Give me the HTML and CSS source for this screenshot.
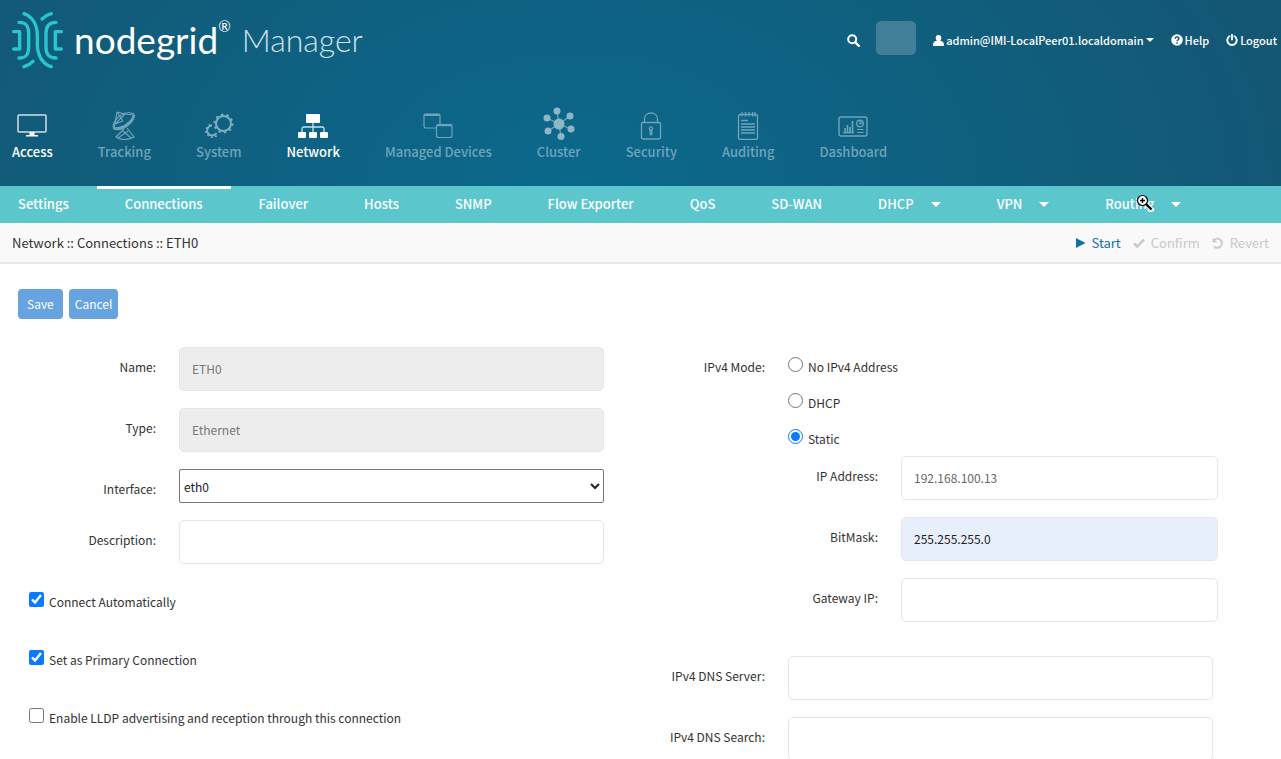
FILE: index.html
```html
<!DOCTYPE html>
<html lang="en">
<head>
<meta charset="utf-8">
<title>nodegrid Manager - Network Connections</title>
<link rel="stylesheet" href="styles.css">
</head>
<body>
<header class="header">
  <div class="topbar">
    <div class="brand">
      <svg class="brand-mark" viewBox="36 30 156 180" aria-hidden="true">
        <g fill="none" stroke="#27c7d2" stroke-width="10" stroke-linecap="round" stroke-linejoin="round">
          <path d="M41 95H59V147H41"/>
          <path d="M57 67C80 67 86 80 86 100V142C86 162 80 174 57 174"/>
          <path d="M72 41C98 50 112 76 112 108V132C112 164 126 192 154 200"/>
          <path d="M126 57Q138 45 154 41"/>
          <path d="M72 200Q88 195 99 184"/>
          <path d="M168 67C145 67 138 80 138 100V142C138 162 145 174 168 174"/>
          <path d="M184 95H166V147H184"/>
        </g>
      </svg>
      <span class="brand-name">nodegrid<sup class="brand-reg">®</sup></span>
      <span class="brand-product">Manager</span>
    </div>
    <div class="user-tools">
      <button class="tool" type="button" aria-label="Search">
        <svg width="13" height="13" viewBox="0 0 13 13" aria-hidden="true"><circle cx="5.2" cy="5.2" r="4" fill="none" stroke="#fff" stroke-width="2"/><path d="M8.3 8.3L11.8 11.8" stroke="#fff" stroke-width="2.4" stroke-linecap="round"/></svg>
      </button>
      <span class="tile"></span>
      <button class="tool tool-user" type="button">
        <svg width="11" height="11" viewBox="0 0 11 11" aria-hidden="true"><path fill="#fff" d="M5.500 0a2.800 3 0 0 1 2.800 3c0 1.200-.5 2.200-1.200 2.700C9.800 6 11 7.400 11 10c0 .6-.4 1-1 1H1c-.6 0-1-.4-1-1 0-2.600 1.200-4 3.900-4.300C3.200 5.200 2.700 4.200 2.700 3a2.800 3 0 0 1 2.800-3z"/></svg>
        <span>admin@IMI-LocalPeer01.localdomain</span><span class="caret"></span>
      </button>
      <a class="tool tool-help" href="#help">
        <svg width="12" height="12" viewBox="0 0 12 12" aria-hidden="true"><circle cx="6" cy="6" r="5.800" fill="#fff"/><path d="M4.200 4.700C4.200 2.300 7.900 2.400 7.900 4.500 7.900 5.700 6.100 5.800 6.100 7.200M6.100 8.300V9.700" fill="none" stroke="#115d7d" stroke-width="1.500"/></svg>
        Help</a>
      <a class="tool" href="#logout">
        <svg width="12" height="12" viewBox="0 0 12 12" aria-hidden="true"><path d="M3.500 2.300A4.700 4.700 0 1 0 8.500 2.300M6 .8V5.500" fill="none" stroke="#fff" stroke-width="1.900" stroke-linecap="round"/></svg>
        Logout</a>
    </div>
  </div>

  <nav class="main-nav" aria-label="Main">
    <a class="main-item main-item-on" href="#access">
      <svg width="30" height="30" viewBox="0 0 30 30" aria-hidden="true"><rect x="1" y="5" width="28" height="17" rx="1" fill="none" stroke="#d0e0e7" stroke-width="1.500"/><path d="M12.500 22h5v3h3.500v1.500H9V25h3.500z" fill="#fff"/></svg>
      Access</a>
    <a class="main-item" href="#tracking">
      <svg width="30" height="30" viewBox="0 0 30 30" aria-hidden="true"><g fill="none" stroke="currentColor" stroke-width="1.200"><path d="M25 4C26 11 15 22 5 19 1 12 14 -1 25 4z"/><path d="M25 5C24 12 14 19 5 18.500" stroke-width="2.600"/><path d="M8 2L16 4 24 5M8 2L5 18M8 2L14 11M14 11L6 14M16 4L6 14M15 19L7 27Q15 32 25 27L18 18M14 21L22 28M19 21L9 28"/></g></svg>
      Tracking</a>
    <a class="main-item" href="#system">
      <svg width="30" height="30" viewBox="0 0 30 30" aria-hidden="true"><g fill="none" stroke="#7fafc2"><circle cx="19.500" cy="13.500" r="7.500" stroke-width="2"/><circle cx="19.500" cy="13.500" r="9" stroke-width="2" stroke-dasharray="2.400 3.255"/><path d="M8 15.500A5 5 0 1 0 12.500 23" stroke-width="1.800"/><path d="M6.500 14.500A6.500 6.500 0 1 0 14 24" stroke-width="1.600" stroke-dasharray="2 2.200"/></g></svg>
      System</a>
    <a class="main-item main-item-on" href="#network">
      <svg width="30" height="30" viewBox="0 0 30 30" aria-hidden="true"><g fill="#fff"><rect x="8" y="4" width="14" height="9" rx="1"/><rect x="0" y="22" width="8" height="6" rx="1"/><rect x="11" y="22" width="8" height="6" rx="1"/><rect x="22" y="22" width="8" height="6" rx="1"/></g><path d="M15 13V22M4 22V18.500Q4 17 6 17H24Q26 17 26 18.500V22" fill="none" stroke="#d0e0e7" stroke-width="1.300"/></svg>
      Network</a>
    <a class="main-item" href="#devices">
      <svg width="30" height="30" viewBox="0 0 30 30" aria-hidden="true"><g fill="none" stroke="currentColor" stroke-width="1.200"><path d="M13 18H3Q1 18 1 16V6Q1 4 3 4H15Q17 4 17 6V14"/><rect x="13.500" y="14.500" width="15.500" height="13" rx="2"/><path d="M1 5H17M14 15.300H29" stroke-width="2"/></g></svg>
      Managed Devices</a>
    <a class="main-item" href="#cluster">
      <svg width="34" height="34" viewBox="0 0 34 34" aria-hidden="true"><path d="M17 18L15 5M17 18L28 10M17 18L29 23M17 18L19 31M17 18L6 25M17 18L5 12" stroke="currentColor" stroke-width="1.300"/><g class="solid"><circle cx="17" cy="18" r="5.500"/><circle cx="15" cy="5" r="3.500"/><circle cx="28" cy="10" r="3.500"/><circle cx="29" cy="23" r="3.500"/><circle cx="19" cy="30.500" r="3.500"/><circle cx="6" cy="25" r="3.500"/><circle cx="5" cy="12" r="3.500"/></g></svg>
      Cluster</a>
    <a class="main-item" href="#security">
      <svg width="30" height="30" viewBox="0 0 30 30" aria-hidden="true"><g fill="none" stroke="currentColor" stroke-width="1.300"><rect x="5.500" y="12.500" width="19" height="16.500" rx="1.500"/><path d="M8.500 12.500V9C8.500 1 21.500 1 21.500 9V12.500"/><circle cx="15" cy="18.500" r="1.700"/><path d="M14.300 20V24.500H15.700V20"/></g></svg>
      Security</a>
    <a class="main-item" href="#auditing">
      <svg width="30" height="30" viewBox="0 0 30 30" aria-hidden="true"><g fill="none" stroke="currentColor" stroke-width="1.300"><rect x="5.500" y="4.500" width="19" height="25" rx="2"/><path d="M9 2V6.500M12.500 2V6.500M16 2V6.500M19.500 2V6.500M22 2V6.500M8 10.500H15M8 14H22M8 17H22M8 20H22M8 23H22"/></g></svg>
      Auditing</a>
    <a class="main-item" href="#dashboard">
      <svg width="30" height="30" viewBox="0 0 30 30" aria-hidden="true"><g fill="none" stroke="currentColor"><rect x="1" y="7" width="28" height="19" rx="2" stroke-width="1.400"/><path d="M7 22V18M9.500 22V15M12 22V17M14.500 22V11" stroke-width="1.600"/><path d="M5 22.700H16M19 19.500H25.500M19 22.500H25.500" stroke-width="1.200"/><circle cx="22" cy="13.500" r="3.300" stroke-width="1.300"/><path d="M22 10V14L25 12" stroke-width="1.200"/></g></svg>
      Dashboard</a>
  </nav>
</header>

<nav class="sub-nav" aria-label="Network">
  <a class="sub-item" href="#settings">Settings</a>
  <a class="sub-item sub-item-on" href="#connections">Connections</a>
  <a class="sub-item" href="#failover">Failover</a>
  <a class="sub-item" href="#hosts">Hosts</a>
  <a class="sub-item" href="#snmp">SNMP</a>
  <a class="sub-item" href="#flow">Flow Exporter</a>
  <a class="sub-item" href="#qos">QoS</a>
  <a class="sub-item" href="#sdwan">SD-WAN</a>
  <a class="sub-item" href="#dhcp">DHCP<span class="caret"></span></a>
  <a class="sub-item" href="#vpn">VPN<span class="caret"></span></a>
  <a class="sub-item" href="#routing">Routing<span class="caret"></span>
    <svg class="pointer" width="18" height="18" viewBox="0 0 18 18" aria-hidden="true"><path d="M9.500 9.500L16 16" stroke="#fff" stroke-width="4"/><path d="M9.500 9.500L15.500 15.500" stroke="#000" stroke-width="2.400"/><circle cx="6.500" cy="6.500" r="5" fill="#fff" stroke="#000" stroke-width="1.200"/><path d="M6.500 4V9M4 6.500H9" stroke="#000" stroke-width="1.400"/></svg>
  </a>
</nav>

<div class="crumb-bar">
  <div>Network :: Connections :: ETH0</div>
  <div class="crumb-actions">
    <button class="action action-start" type="button"><svg width="11" height="12" viewBox="0 0 11 12" aria-hidden="true"><path d="M1 1L10.500 6 1 11z" fill="currentColor"/></svg>Start</button>
    <button class="action" type="button" disabled><svg width="12" height="12" viewBox="0 0 12 12" aria-hidden="true"><path d="M1 6.500L4.300 9.500 11 2.500" fill="none" stroke="currentColor" stroke-width="2.400"/></svg>Confirm</button>
    <button class="action" type="button" disabled><svg width="12" height="12" viewBox="0 0 12 12" aria-hidden="true"><path d="M2 3A4.600 4.600 0 1 1 2 9.500" fill="none" stroke="currentColor" stroke-width="1.800"/><path d="M.5 .8V5.200H5z" fill="currentColor"/></svg>Revert</button>
  </div>
</div>

<main>
  <form class="form">
    <div class="form-buttons">
      <button class="btn" type="button">Save</button>
      <button class="btn btn-tight" type="button">Cancel</button>
    </div>
    <div class="columns">
      <div class="column">
        <div class="field"><label class="label" for="name">Name:</label><input class="input" id="name" type="text" value="ETH0" disabled></div>
        <div class="field"><label class="label" for="type">Type:</label><input class="input" id="type" type="text" value="Ethernet" disabled></div>
        <div class="field"><label class="label" for="iface">Interface:</label>
          <select class="select" id="iface"><option>eth0</option></select></div>
        <div class="field"><label class="label" for="desc">Description:</label><input class="input" id="desc" type="text"></div>
        <div class="checks">
          <label class="choice"><input class="tick" type="checkbox" checked><span>Connect Automatically</span></label>
          <label class="choice"><input class="tick" type="checkbox" checked><span>Set as Primary Connection</span></label>
          <label class="choice"><input class="tick" type="checkbox"><span>Enable LLDP advertising and reception through this connection</span></label>
        </div>
      </div>
      <div class="column">
        <div class="field mode" role="radiogroup" aria-labelledby="mode-label">
          <span class="label" id="mode-label">IPv4 Mode:</span>
          <div class="radios">
            <label class="choice"><input class="tick" type="radio" name="mode"><span>No IPv4 Address</span></label>
            <label class="choice"><input class="tick" type="radio" name="mode"><span>DHCP</span></label>
            <label class="choice"><input class="tick" type="radio" name="mode" checked><span>Static</span></label>
          </div>
        </div>
        <div class="nested">
          <div class="field field-nested"><label class="label" for="ip">IP Address:</label><input class="input" id="ip" type="text" value="192.168.100.13"></div>
          <div class="field field-nested"><label class="label" for="mask">BitMask:</label><input class="input input-filled" id="mask" type="text" value="255.255.255.0"></div>
          <div class="field field-nested"><label class="label" for="gw">Gateway IP:</label><input class="input" id="gw" type="text"></div>
        </div>
        <div class="field"><label class="label" for="dns">IPv4 DNS Server:</label><input class="input" id="dns" type="text"></div>
        <div class="field"><label class="label" for="search">IPv4 DNS Search:</label><input class="input" id="search" type="text"></div>
      </div>
    </div>
  </form>
</main>
</body>
</html>
```

FILE: styles.css
```css
* { box-sizing: border-box; }

body {
  margin: 0;
  height: 100vh;
  overflow: hidden;
  background: #fefefe;
  color: #333;
  font: 12px/20px "Noto Sans CJK SC", "Noto Sans", sans-serif;
}

a { color: inherit; text-decoration: none; }

button, input, select { font: inherit; }

.header {
  height: 186px;
  background: radial-gradient(ellipse 60% 260% at 45% 100%, #0b698c, #145673);
  color: #fff;
}

.topbar {
  display: flex;
  justify-content: space-between;
  height: 109px;
  padding: 10px 4px 0 12px;
}

.brand { display: flex; align-items: center; height: 60px; }

.brand-mark { width: 52px; height: 60px; margin-right: 10px; }

.brand-name, .brand-product {
  font-family: Lato, sans-serif;
  font-size: 37px;
  line-height: 40px;
}

.brand-reg { font-size: 15px; line-height: 0; vertical-align: 22px; }

.brand-product {
  margin-left: 11px;
  font-size: 32px;
  font-weight: 300;
  color: #cfe0e8;
}

.user-tools { display: flex; align-items: center; height: 60px; }

.tool {
  display: flex;
  align-items: center;
  gap: 2px;
  padding: 0;
  border: 0;
  background: none;
  color: #fff;
  font-size: 11px;
  font-weight: 500;
}

.tool-user, .tool-help { margin-right: 17px; }

.tile {
  width: 40px;
  height: 34px;
  margin: 0 17px 4px 16px;
  border-radius: 5px;
  background: #417f99;
}

.caret {
  display: inline-block;
  border: 4px solid transparent;
  border-top-color: currentColor;
  border-bottom: 0;
}

.main-nav {
  display: flex;
  gap: 45px;
  padding-left: 12px;
  font-size: 13px;
}

.main-item {
  display: flex;
  flex-direction: column;
  align-items: center;
  justify-content: flex-end;
  height: 53px;
  color: #6fa4b9;
  font-weight: 500;
  white-space: nowrap;
}

.main-item svg { flex: none; margin-bottom: 2px; }

.main-item-on { color: #fff; }

.solid { fill: #8db7c8; }

.sub-nav {
  display: flex;
  height: 37px;
  background: #5bc6cc;
  color: #fff;
  font-size: 13px;
  font-weight: 500;
}

.sub-item {
  position: relative;
  padding: 5px 28px 0;
  border-top: 3px solid transparent;
  white-space: nowrap;
}

.sub-item:first-child { padding-left: 18px; }

.sub-item-on { border-color: #fff; }

.sub-item .caret { margin-left: 17px; border-width: 5px 5px 0; vertical-align: 2px; }

.pointer { position: absolute; top: 5px; left: 59px; }

.crumb-bar {
  display: flex;
  justify-content: space-between;
  align-items: center;
  height: 41px;
  padding: 0 12px;
  border-bottom: 2px solid #e8e8e8;
  background: #f9f9f9;
  font-size: 13px;
}

.crumb-actions { display: flex; gap: 12px; }

.action {
  display: flex;
  align-items: center;
  gap: 6px;
  padding: 0;
  border: 0;
  background: none;
  color: #c8c8c8;
}

.action-start { color: #1272a8; }

.form-buttons { display: flex; gap: 6px; padding: 25px 18px 28px; }

.btn {
  height: 30px;
  padding: 0 9px;
  border: 0;
  border-radius: 4px;
  background: #66a3df;
  color: #fff;
}

.btn-tight { padding: 0 6px; }

.columns {
  display: grid;
  grid-template-columns: 1fr 1fr;
  padding-right: 63px;
}

.column { display: flex; flex-direction: column; gap: 17px; }

.field {
  display: grid;
  grid-template-columns: 156px 1fr;
  column-gap: 23px;
  padding-right: 5px;
}

.label { padding-top: 10px; text-align: right; }

.input {
  width: 100%;
  height: 44px;
  padding: 0 12px 2px;
  border: 1px solid #e6e6e6;
  border-radius: 5px;
  background: #fff;
  color: #666;
}

.input:disabled { background: #ededed; color: #777; }

.input-filled { background: #e8effc; color: #222; }

.select {
  width: 100%;
  height: 34px;
  padding: 0;
  border: 1px solid #767676;
  border-radius: 2px;
  background: #fff;
  color: #222;
}

.checks { display: flex; flex-direction: column; gap: 38px; padding: 11px 29px 0; }

.choice { display: flex; align-items: flex-start; gap: 5px; }

.tick { width: 15px; height: 15px; margin: 0; accent-color: #0a7aff; }

.radios { display: flex; flex-direction: column; gap: 16px; padding-top: 10px; }

.mode { margin-bottom: -10px; }

.nested { display: grid; gap: 17px; padding: 0 0 17px 179px; }

.field-nested { grid-template-columns: 90px 1fr; padding-right: 0; }
```
